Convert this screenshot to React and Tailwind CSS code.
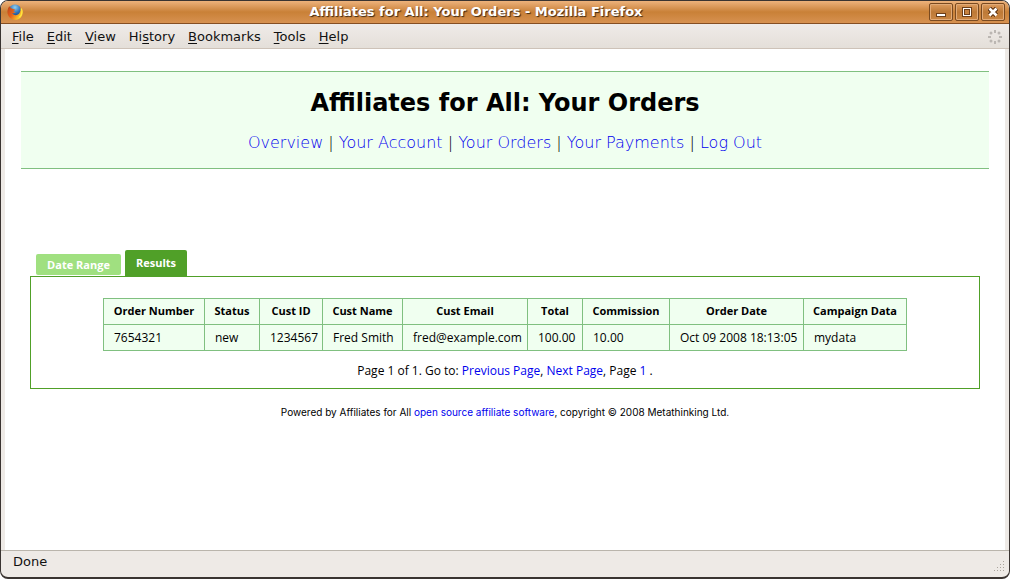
import React from "react";

const columns = [
  { name: "Order Number", value: "7654321", width: "w-[101px]" },
  { name: "Status", value: "new", width: "w-[55px]" },
  { name: "Cust ID", value: "1234567", width: "w-[63px]" },
  { name: "Cust Name", value: "Fred Smith", width: "w-[80px]" },
  { name: "Cust Email", value: "fred@example.com", width: "w-[125px]" },
  { name: "Total", value: "100.00", width: "w-[55px]" },
  { name: "Commission", value: "10.00", width: "w-[87px]" },
  { name: "Order Date", value: "Oct 09 2008 18:13:05", width: "w-[134px]" },
  { name: "Campaign Data", value: "mydata", width: "w-[103px]" },
];

const menus = [
  ["", "F", "ile"],
  ["", "E", "dit"],
  ["", "V", "iew"],
  ["Hi", "s", "tory"],
  ["", "B", "ookmarks"],
  ["", "T", "ools"],
  ["", "H", "elp"],
];

const navLinks = ["Overview", "Your Account", "Your Orders", "Your Payments", "Log Out"];

function BrowserLogo() {
  return (
    <svg className="h-4 w-4" viewBox="0 0 16 16" aria-hidden="true">
      <defs>
        <radialGradient id="globe" cx="0.5" cy="0.2" r="0.8">
          <stop offset="0" stopColor="#8fd0f0" />
          <stop offset="0.5" stopColor="#2f6fb5" />
          <stop offset="1" stopColor="#142a66" />
        </radialGradient>
        <linearGradient id="fox" x1="0" y1="0" x2="1" y2="0.6">
          <stop offset="0" stopColor="#b8431a" />
          <stop offset="0.5" stopColor="#e8641a" />
          <stop offset="1" stopColor="#ffd92e" />
        </linearGradient>
      </defs>
      <circle cx="8" cy="7.6" r="7" fill="url(#globe)" />
      <path d="M2.200 2.200C.2 5 0 8.400 1 11c1.300 3 4 4.800 7.200 4.800 4.300 0 7.500-3.300 7.500-7.600 0-2.400-.9-4.400-2.500-5.700.6 1.700.4 3.200.1 4.600-.6 2.700-2.100 4.100-4.400 4.100-1.900 0-3.200-.9-3.600-2.200 1.200.5 2.600.3 3.500-.5-1.500-.2-2.100-.7-2.300-1.500.6-.3 1.500-.5 1.700-1-.6-.9-1.900-1-2.800-1.300-.9-.3-1.900-1.200-3.200-2.500z" fill="url(#fox)" />
      <path d="M14.200 4.500c1.200 3 .8 6.400-1.900 8.800" fill="none" stroke="#ffe640" strokeWidth="1.300" />
    </svg>
  );
}

function WindowButton({ label, children }) {
  return (
    <button
      type="button"
      aria-label={label}
      className="flex h-[18px] w-6 items-center justify-center rounded-[2px] border border-[#7a4a20] bg-linear-to-b from-[#dd9c5e] via-[#bd7936] to-[#cb8744] shadow-[inset_0_0_0_1px_#e2ab78]"
    >
      <svg className="h-4 w-[22px]" viewBox="0 0 22 16" shapeRendering="crispEdges" aria-hidden="true">
        {children}
      </svg>
    </button>
  );
}

function Throbber() {
  return (
    <svg className="h-4 w-4" viewBox="0 0 16 16" fill="#bbb6b2" aria-hidden="true">
      <rect x="7" y="1" width="2" height="3" />
      <rect x="7" y="12" width="2" height="3" />
      <rect x="1" y="7" width="3" height="2" />
      <rect x="12" y="7" width="3" height="2" />
      <circle cx="4" cy="4" r="1.500" />
      <circle cx="12" cy="4" r="1.500" />
      <circle cx="4" cy="12" r="1.500" />
      <circle cx="12" cy="12" r="1.500" />
    </svg>
  );
}

function PageLink({ children }) {
  return (
    <a href="#" className="text-[#0000ee]">
      {children}
    </a>
  );
}

export default function App() {
  return (
    <div className="flex h-screen flex-col overflow-hidden rounded-lg border border-b-2 border-[#3a3431] bg-[#eeeae6] font-['DejaVu_Sans',sans-serif] text-[13px] text-[#111111]">
      <header className="flex h-[23px] shrink-0 items-center justify-between border-b border-[#854e22] bg-linear-to-b from-[#edb27b] via-[#c98137] to-[#d79150] pr-1 pl-[6px]">
        <BrowserLogo />
        <h1 className="font-bold text-white [text-shadow:1px_1px_1px_#3d2814]">
          Affiliates for All: Your Orders - Mozilla Firefox
        </h1>
        <div className="flex justify-end gap-[2px]">
          <WindowButton label="Minimize">
            <rect x="6" y="9" width="10" height="4" fill="#6b3f1b" />
            <rect x="7" y="10" width="8" height="2" fill="#fff" />
          </WindowButton>
          <WindowButton label="Maximize">
            <rect x="6" y="3" width="10" height="10" fill="#6b3f1b" />
            <rect x="7" y="4" width="8" height="8" fill="#fff" />
            <rect x="8" y="5" width="6" height="6" fill="#6b3f1b" />
            <rect x="9" y="6" width="4" height="4" fill="#c68240" />
          </WindowButton>
          <WindowButton label="Close">
            <path d="M7.500 4.500l7 7M14.500 4.500l-7 7" stroke="#6b3f1b" strokeWidth="5" />
            <path d="M7.500 4.500l7 7M14.500 4.500l-7 7" stroke="#fff" strokeWidth="2.500" shapeRendering="auto" />
          </WindowButton>
        </div>
      </header>

      <nav aria-label="Menu bar" className="flex h-[25px] shrink-0 items-center justify-between border-b border-[#cdc2b8] bg-linear-to-b from-[#efebe8] to-[#e4dfd9] pt-px pr-[6px] pl-[11px]">
        <div className="flex gap-[13px]">
          {menus.map(([before, key, after]) => (
            <button type="button" key={before + key + after}>
              {before}
              <span className="underline underline-offset-2">{key}</span>
              {after}
            </button>
          ))}
        </div>
        <Throbber />
      </nav>

      <main className="mx-1 flex-1 bg-white px-4 pt-[22px] text-black">
        <section className="flex h-[98px] flex-col items-center border-y border-[#80c080] bg-[#f0fff0] pt-4">
          <h2 className="text-2xl leading-[30px] font-bold">Affiliates for All: Your Orders</h2>
          <nav aria-label="Account" className="mt-3 text-base leading-[26px] font-extralight">
            {navLinks.map((link, i) => (
              <React.Fragment key={link}>
                {i > 0 && " | "}
                <PageLink>{link}</PageLink>
              </React.Fragment>
            ))}
          </nav>
        </section>

        <section className="mx-[9px] mt-[81px] font-['Open_Sans',sans-serif] text-xs">
          <div role="tablist" className="flex items-end gap-1 pl-[6px] text-[11px] font-bold text-white">
            <button type="button" role="tab" aria-selected="false" className="mb-px h-[21px] w-[85px] rounded-[2px] bg-[#a0e080] pt-px">
              Date Range
            </button>
            <button type="button" role="tab" aria-selected="true" className="h-[26px] w-[62px] rounded-t-[2px] bg-[#50a028] pt-px">
              Results
            </button>
          </div>
          <div className="border border-[#50a028] pt-[21px] pb-[9px]">
            <table className="mx-auto w-[804px] table-fixed border-collapse bg-[#f0fff0]">
              <thead>
                <tr className="h-[26px] text-[11px]">
                  {columns.map((c) => (
                    <th key={c.name} scope="col" className={`border border-[#80c080] whitespace-nowrap ${c.width}`}>
                      {c.name}
                    </th>
                  ))}
                </tr>
              </thead>
              <tbody>
                <tr className="h-[26px]">
                  {columns.map((c) => (
                    <td key={c.name} className="border border-[#80c080] pl-[10px] whitespace-nowrap">
                      {c.value}
                    </td>
                  ))}
                </tr>
              </tbody>
            </table>
            <p className="mt-3 text-center leading-4">
              Page 1 of 1. Go to: <PageLink>Previous Page</PageLink>, <PageLink>Next Page</PageLink>, Page{" "}
              <PageLink>1</PageLink> .
            </p>
          </div>
        </section>

        <footer className="mt-4 text-center font-['Inter',sans-serif] text-[10px] leading-[14px]">
          Powered by Affiliates for All <PageLink>open source affiliate software</PageLink>, copyright © 2008 Metathinking Ltd.
        </footer>
      </main>

      <div className="flex h-[27px] shrink-0 items-start justify-between border-t border-[#bab5ac] pr-1 pl-3">
        <span role="status" className="leading-[22px]">Done</span>
        <svg className="mt-[10px] h-3 w-3" viewBox="0 0 12 12" fill="#aaa49c" shapeRendering="crispEdges" aria-hidden="true">
          <path d="M10 0h1v1h-1zM10 3h1v1h-1zM7 3h1v1h-1zM10 6h1v1h-1zM7 6h1v1h-1zM4 6h1v1h-1zM10 9h1v1h-1zM7 9h1v1h-1zM4 9h1v1h-1zM1 9h1v1h-1z" />
        </svg>
      </div>
    </div>
  );
}
